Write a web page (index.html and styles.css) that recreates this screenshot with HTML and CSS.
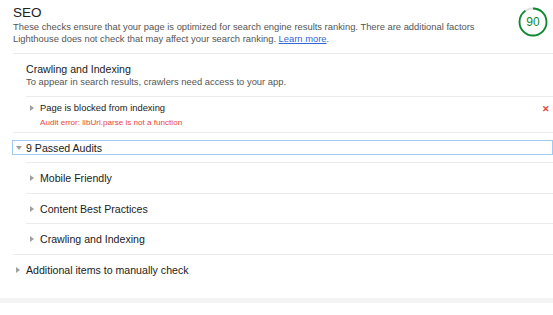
FILE: index.html
```html
<!DOCTYPE html>
<html lang="en">
<head>
  <meta charset="UTF-8" />
  <title>SEO - Lighthouse</title>
  <link rel="stylesheet" href="styles.css">
</head>
<body>
  <div class="category">
    <div class="cat-header">
      <div class="cat-text">
        <div class="cat-title">SEO</div>
        <div class="cat-desc">These checks ensure that your page is optimized for search engine results ranking. There are additional factors Lighthouse does not check that may affect your search ranking. <a href="#">Learn more</a>.</div>
      </div>
      <div class="gauge">
        <svg width="30" height="30" viewBox="0 0 30 30">
          <circle cx="15" cy="15" r="13.5" fill="none" stroke="#e0e0e0" stroke-width="1.8"/>
          <circle cx="15" cy="15" r="13.5" fill="none" stroke="#0b8a30" stroke-width="1.8"
                  stroke-dasharray="76.3 84.8" transform="rotate(-90 15 15)"/>
        </svg>
        <span class="gauge-num">90</span>
      </div>
    </div>

    <div class="group">
      <div class="group-title">Crawling and Indexing</div>
      <div class="group-desc">To appear in search results, crawlers need access to your app.</div>
      <div class="audit">
        <span class="arrow right"></span>
        <div class="audit-body">
          <div class="audit-title">Page is blocked from indexing</div>
          <div class="audit-error">Audit error: libUrl.parse is not a function</div>
        </div>
        <span class="fail-mark">&#x2715;</span>
      </div>
    </div>

    <div class="passed">
      <div class="passed-head">
        <span class="arrow down"></span>
        <span>9 Passed Audits</span>
      </div>
      <div class="sub-list">
        <div class="sub-row"><span class="arrow right"></span>Mobile Friendly</div>
        <div class="sub-row"><span class="arrow right"></span>Content Best Practices</div>
        <div class="sub-row"><span class="arrow right"></span>Crawling and Indexing</div>
      </div>
    </div>

    <div class="manual"><span class="arrow right"></span>Additional items to manually check</div>
  </div>
  <div class="band"></div>
</body>
</html>
```

FILE: styles.css
```css
body {
  margin: 0;
  font-family: "Liberation Sans", Arial, sans-serif;
  color: #212121;
  background: #fff;
}

.category {
  padding: 0 0 21px 13px;
}

.cat-header {
  display: flex;
  align-items: flex-start;
  padding: 5px 0 8px;
  border-bottom: 1px solid #ebebeb;
}

.cat-text {
  flex: 1;
  padding-right: 20px;
}

.cat-title {
  font-size: 13.5px;
  line-height: 16px;
}

.cat-desc {
  font-size: 9.4px;
  line-height: 12px;
  color: #555;
}

.cat-desc a {
  color: #3367d6;
}

.gauge {
  position: relative;
  width: 30px;
  height: 30px;
  margin: 2px 5px 0 0;
}

.gauge svg {
  display: block;
}

.gauge-num {
  position: absolute;
  inset: 0;
  display: flex;
  align-items: center;
  justify-content: center;
  font-size: 12px;
  color: #0b8a30;
}

/* groups */
.group {
  padding: 8px 0 0 13px;
  border-bottom: 1px solid #ebebeb;
}

.group-title {
  font-size: 10.6px;
  line-height: 14px;
}

.group-desc {
  font-size: 9.4px;
  line-height: 12px;
  color: #555;
  padding-bottom: 8px;
}

.audit {
  display: flex;
  align-items: flex-start;
  border-top: 1px solid #ebebeb;
  padding: 4px 0 3px;
}

.audit-body {
  flex: 1;
}

.audit-title {
  font-size: 9.4px;
  line-height: 14px;
}

.audit-error {
  font-size: 8.1px;
  line-height: 12px;
  margin-top: 2px;
  color: #e8453c;
}

.fail-mark {
  color: #e8453c;
  font-size: 9px;
  line-height: 14px;
  margin: 1px 3px 0 0;
  font-weight: bold;
}

/* arrows */
.arrow {
  display: inline-block;
  width: 0;
  height: 0;
  flex: none;
}

.arrow.right {
  border-top: 3px solid transparent;
  border-bottom: 3px solid transparent;
  border-left: 4px solid #a0a0a0;
  margin: 4px 6px 0 4px;
}

.arrow.down {
  border-left: 3px solid transparent;
  border-right: 3px solid transparent;
  border-top: 4px solid #a0a0a0;
  margin: 0 4px 0 1px;
}

/* passed audits */
.passed-head {
  display: flex;
  align-items: center;
  height: 13px;
  margin: 8px 1px 8px 0;
  outline: 1px solid #9ecaf3;
  font-size: 10.6px;
  padding-left: 2px;
}

.sub-list {
  margin-left: 13px;
}

.sub-row {
  display: flex;
  align-items: flex-start;
  border-top: 1px solid #ebebeb;
  padding: 8px 0 7.7px;
  font-size: 10.6px;
  line-height: 14px;
}

.manual {
  display: flex;
  align-items: flex-start;
  border-top: 1px solid #ebebeb;
  padding: 7.5px 0 0;
  font-size: 10.6px;
  line-height: 14px;
}

.manual .arrow.right {
  margin-left: 3px;
}

.band {
  height: 5px;
  background: #f4f4f4;
}
```
